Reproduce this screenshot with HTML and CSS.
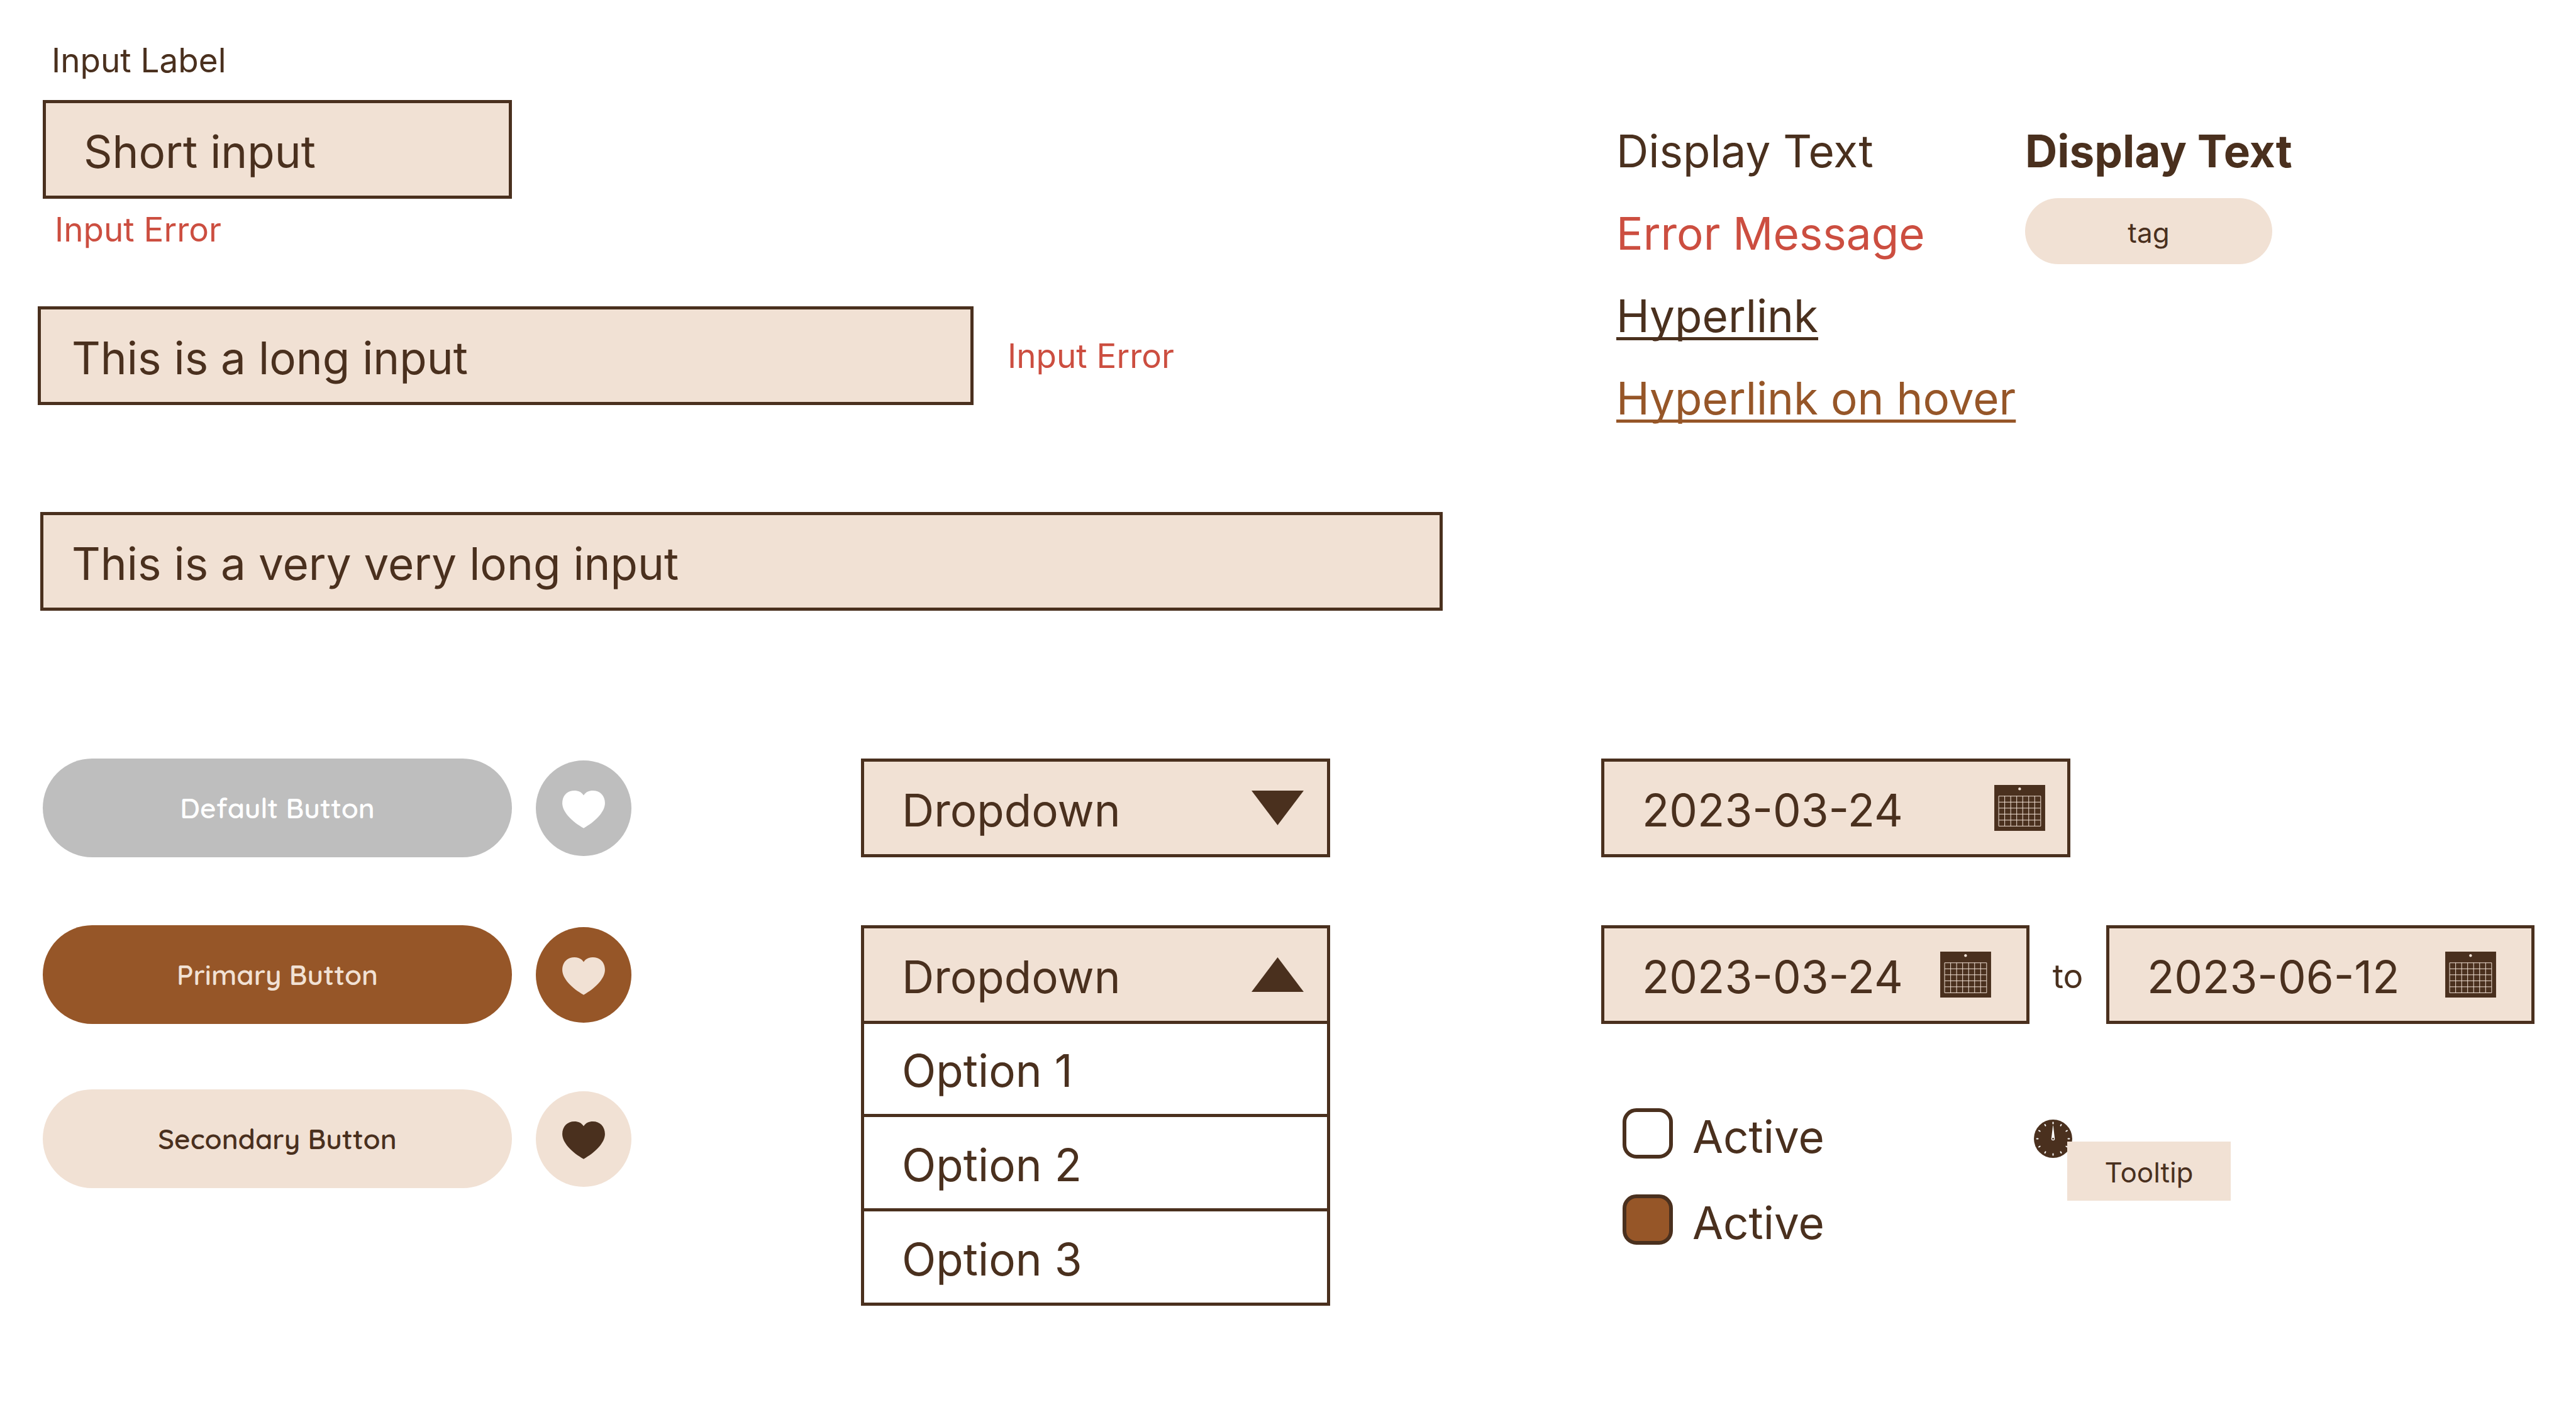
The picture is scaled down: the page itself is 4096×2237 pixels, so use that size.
FILE: index.html
```html
<!DOCTYPE html>
<html lang="en">
<head>
<meta charset="utf-8">
<meta name="viewport" content="width=device-width, initial-scale=1">
<title>Components</title>
<link rel="stylesheet" href="styles.css">
</head>
<body>
<svg class="sprite" aria-hidden="true">
  <symbol id="heart" viewBox="0 0 104 92">
    <path fill="currentColor" d="M52 11.500C47 3.500 39 0 29.500 0C12 0 0 12.500 0 30.700C0 52 24 76 52 91.500C80 76 104 52 104 30.700C104 12.500 92 0 74.500 0C65 0 57 3.500 52 11.500Z"/>
  </symbol>
  <symbol id="calendar" viewBox="0 0 123 111">
    <path fill="currentColor" d="M0 0H123V111H0Z"/>
    <circle class="calendar-line" cx="61.300" cy="9.500" r="3.300"/>
    <path class="calendar-grid" d="M10.700 27H112.200V99.500H10.700ZM10.700 41.500H112.200M10.700 56H112.200M10.700 70.500H112.200M10.700 85H112.200M25.200 27V99.500M39.700 27V99.500M54.200 27V99.500M68.700 27V99.500M83.200 27V99.500M97.700 27V99.500"/>
  </symbol>
</svg>

<main class="page">
  <section class="fields">
    <label class="label" for="short">Input Label</label>
    <input class="control control--short" id="short" type="text" value="Short input">
    <p class="error error--below">Input Error</p>
    <div class="field-row">
      <input class="control control--long" type="text" value="This is a long input" aria-label="Long input">
      <p class="error">Input Error</p>
    </div>
    <input class="control control--full" type="text" value="This is a very very long input" aria-label="Very long input">
  </section>

  <section class="type">
    <div class="type-column">
      <p class="type-line">Display Text</p>
      <p class="type-line type-line--error">Error Message</p>
      <p class="type-line"><a class="link" href="#">Hyperlink</a></p>
      <p class="type-line"><a class="link link--hover" href="#">Hyperlink on hover</a></p>
    </div>
    <div class="type-column">
      <p class="type-line type-line--bold">Display Text</p>
      <span class="tag">tag</span>
    </div>
  </section>

  <section class="buttons">
    <div class="button-row">
      <button class="button button--default" type="button">Default Button</button>
      <button class="round button--default" type="button" aria-label="Like"><svg class="heart"><use href="#heart"/></svg></button>
    </div>
    <div class="button-row">
      <button class="button button--primary" type="button">Primary Button</button>
      <button class="round button--primary" type="button" aria-label="Like"><svg class="heart"><use href="#heart"/></svg></button>
    </div>
    <div class="button-row">
      <button class="button button--secondary" type="button">Secondary Button</button>
      <button class="round button--secondary" type="button" aria-label="Like"><svg class="heart"><use href="#heart"/></svg></button>
    </div>
  </section>

  <section class="dropdowns">
    <div class="dropdown">
      <select class="control select" aria-label="Dropdown"><option>Dropdown</option></select>
      <svg class="arrow" viewBox="0 0 83 55" aria-hidden="true"><path fill="currentColor" d="M0 0H83L41.500 55Z"/></svg>
    </div>
    <div>
      <div class="dropdown">
        <select class="control select" aria-label="Open dropdown"><option>Dropdown</option></select>
        <svg class="arrow" viewBox="0 0 83 55" aria-hidden="true"><path fill="currentColor" d="M0 55H83L41.500 0Z"/></svg>
      </div>
      <ul class="options" role="listbox" aria-label="Options">
        <li class="option" role="option">Option 1</li>
        <li class="option" role="option">Option 2</li>
        <li class="option" role="option">Option 3</li>
      </ul>
    </div>
  </section>

  <section class="pickers">
    <div class="date date--single">
      <input class="control date-input" type="text" value="2023-03-24" aria-label="Date">
      <button class="date-button" type="button" aria-label="Open calendar"><svg class="calendar"><use href="#calendar"/></svg></button>
    </div>
    <div class="range">
      <div class="date">
        <input class="control date-input" type="text" value="2023-03-24" aria-label="Start date">
        <button class="date-button" type="button" aria-label="Open calendar"><svg class="calendar"><use href="#calendar"/></svg></button>
      </div>
      <span class="range-to">to</span>
      <div class="date">
        <input class="control date-input" type="text" value="2023-06-12" aria-label="End date">
        <button class="date-button" type="button" aria-label="Open calendar"><svg class="calendar"><use href="#calendar"/></svg></button>
      </div>
    </div>
    <div class="states">
      <div class="checks">
        <label class="check"><input class="check-box" type="checkbox"><span class="check-text">Active</span></label>
        <label class="check"><input class="check-box" type="checkbox" checked><span class="check-text">Active</span></label>
      </div>
      <div class="hint">
        <svg class="gauge" viewBox="-47 -47 94 94" aria-hidden="true">
          <circle r="47" fill="currentColor"/>
          <g class="gauge-ticks">
            <path id="tick" d="M0 -40V-37"/>
            <use href="#tick" transform="rotate(30)"/>
            <use href="#tick" transform="rotate(60)"/>
            <use href="#tick" transform="rotate(90)"/>
            <use href="#tick" transform="rotate(120)"/>
            <use href="#tick" transform="rotate(150)"/>
            <use href="#tick" transform="rotate(180)"/>
            <use href="#tick" transform="rotate(210)"/>
            <use href="#tick" transform="rotate(240)"/>
            <use href="#tick" transform="rotate(270)"/>
            <use href="#tick" transform="rotate(300)"/>
            <use href="#tick" transform="rotate(330)"/>
          </g>
          <path fill="#fff" d="M-0.400 -32.500H0.400L4.200 0A4.200 4.200 0 0 1 -4.200 0Z"/>
          <circle r="2.300" fill="currentColor"/>
        </svg>
        <div class="tooltip" role="tooltip">Tooltip</div>
      </div>
    </div>
  </section>
</main>
</body>
</html>
```

FILE: styles.css
```css
:root {
  --ink: #4a301e;
  --sand: #f1e1d4;
  --rust: #965628;
  --grey: #bebebe;
  --red: #cc4e40;
  --text-lg: 71px;
  --text-md: 53px;
  --text-sm: 44px;
}

* {
  box-sizing: border-box;
}

body {
  margin: 0;
  background: #fff;
  color: var(--ink);
  font-family: Inter, "Liberation Sans", sans-serif;
}

p,
ul {
  margin: 0;
  padding: 0;
}

input,
select,
button {
  margin: 0;
  color: inherit;
  font-family: inherit;
}

.sprite {
  display: none;
}

.page {
  display: grid;
  grid-template-columns: minmax(0, 1309fr) minmax(0, 1177fr) minmax(0, 1484fr);
  row-gap: 235px;
  padding: 64px 66px 64px 60px;
}

/* Form controls */

.control {
  display: block;
  width: 746px;
  max-width: 100%;
  height: 157px;
  padding: 6px 60px 0;
  border: 5px solid var(--ink);
  border-radius: 0;
  background: var(--sand);
  font-size: var(--text-lg);
}

.fields {
  grid-column: span 2;
}

.label,
.error {
  display: block;
  font-size: var(--text-md);
  line-height: 64px;
}

.label {
  padding-left: 22px;
  margin-bottom: 31px;
}

.error {
  color: var(--red);
}

.error--below {
  padding-left: 27px;
  margin: 17px 0 90px;
}

.control--short {
  margin-left: 8px;
}

.field-row {
  display: flex;
  align-items: center;
  gap: 54px;
  margin-bottom: 170px;
}

.control--long {
  width: 1488px;
  padding-left: 49px;
}

.control--full {
  width: 2230px;
  margin-left: 4px;
  padding-left: 45px;
}

/* Typography */

.type {
  display: grid;
  grid-template-columns: 650px auto;
  align-items: start;
  padding: 111px 0 0 24px;
}

.type-line {
  font-size: var(--text-lg);
  line-height: 131px;
}

.type-line--error {
  color: var(--red);
}

.type-line--bold {
  font-weight: 700;
}

.link {
  color: inherit;
  text-decoration: underline 5px;
  text-decoration-skip-ink: none;
  text-underline-offset: 8px;
}

.link--hover {
  color: var(--rust);
}

.tag {
  display: block;
  width: 393px;
  height: 105px;
  margin-top: 9px;
  padding-top: 5px;
  border-radius: 53px;
  background: var(--sand);
  font-size: var(--text-sm);
  line-height: 100px;
  text-align: center;
}

/* Buttons */

.buttons {
  display: grid;
  grid-template-rows: 265px 261px 157px;
  align-content: start;
  padding-left: 8px;
}

.button-row {
  display: flex;
  align-items: center;
  gap: 38px;
  height: 157px;
}

.button,
.round {
  padding: 0;
  border: 0;
}

.button {
  width: 746px;
  height: 157px;
  border-radius: 79px;
  font-family: Quicksand, Nunito, Inter, sans-serif;
  font-size: var(--text-sm);
  font-weight: 600;
}

.round {
  display: grid;
  place-items: center;
  width: 152px;
  height: 152px;
  padding-top: 5px;
  border-radius: 50%;
}

.button--default {
  background: var(--grey);
  color: #fff;
}

.button--primary {
  background: var(--rust);
  color: var(--sand);
}

.button--secondary {
  background: var(--sand);
  color: var(--ink);
}

.heart {
  width: 68px;
  height: 60px;
}

/* Dropdowns */

.dropdowns {
  display: grid;
  align-content: start;
  gap: 108px;
}

.dropdown {
  display: grid;
  align-items: center;
  width: 746px;
}

.select {
  grid-area: 1 / 1;
  appearance: none;
}

.arrow {
  grid-area: 1 / 1;
  justify-self: end;
  width: 83px;
  height: 55px;
  margin-right: 42px;
  pointer-events: none;
}

.options {
  width: 746px;
  margin-top: -2px;
  list-style: none;
}

.option {
  height: 150px;
  padding: 5px 60px 0;
  border: 5px solid var(--ink);
  border-top: 0;
  font-size: var(--text-lg);
  line-height: 142px;
}

/* Date pickers */

.pickers {
  display: grid;
  align-content: start;
}

.date {
  display: grid;
  align-items: center;
  width: 681px;
}

.date--single {
  width: 746px;
  margin-bottom: 108px;
}

.date-input {
  grid-area: 1 / 1;
  width: 100%;
}

.date-button {
  grid-area: 1 / 1;
  justify-self: end;
  margin-right: 61px;
  padding: 0;
  border: 0;
  background: none;
}

.date--single .date-button {
  margin-right: 40px;
}

.calendar {
  display: block;
  width: 81px;
  height: 73px;
}

.calendar-line {
  fill: var(--sand);
}

.calendar-grid {
  fill: none;
  stroke: var(--sand);
  stroke-width: 1.5px;
}

.range {
  display: flex;
  align-items: center;
  justify-content: space-between;
}

.range-to {
  padding-top: 4px;
  font-size: var(--text-md);
}

/* Check boxes and tooltip */

.states {
  display: grid;
  grid-template-columns: 654px auto;
  padding: 134px 0 0 34px;
}

.checks {
  display: grid;
  gap: 57px;
}

.check {
  display: flex;
  gap: 31px;
  height: 80px;
}

.check-box {
  width: 80px;
  height: 80px;
  border: 6px solid var(--ink);
  border-radius: 22px;
  background: #fff;
  appearance: none;
}

.check-box:checked {
  background: var(--rust);
}

.check-text {
  padding-top: 5px;
  font-size: var(--text-lg);
  line-height: 80px;
}

.hint {
  position: relative;
  width: 61px;
  padding-top: 18px;
}

.gauge {
  display: block;
  width: 61px;
  height: 61px;
}

.gauge-ticks {
  fill: none;
  stroke: #fff;
  stroke-width: 3px;
  stroke-linecap: round;
}

.tooltip {
  position: absolute;
  top: 53px;
  left: 53px;
  width: 260px;
  height: 94px;
  padding-top: 5px;
  background: var(--sand);
  font-size: var(--text-sm);
  line-height: 89px;
  text-align: center;
}
```
